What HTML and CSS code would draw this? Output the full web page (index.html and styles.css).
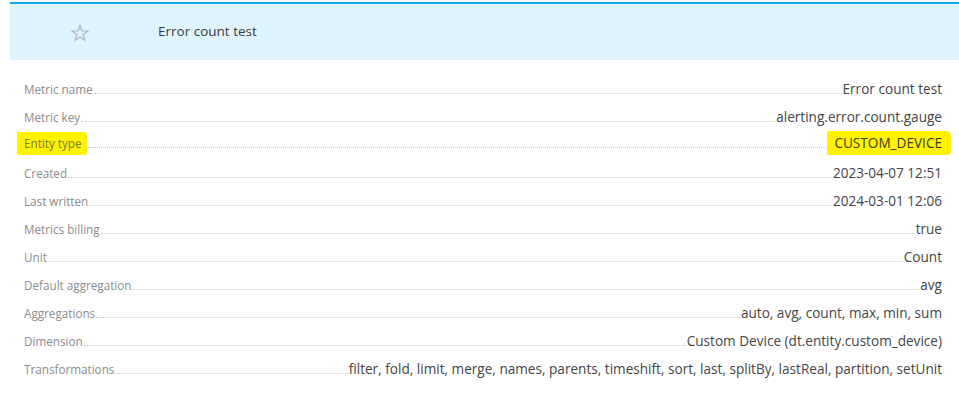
FILE: index.html
```html
<!DOCTYPE html>
<html>
<head>
<meta charset="utf-8">
<link rel="stylesheet" href="styles.css">
</head>
<body>
<div class="page">
  <div class="header">
    <div class="star-col">
      <svg class="star" width="18" height="18" viewBox="0 0 18 18"><path d="M9 1.2 L11 6.9 L17 7 L12.2 10.6 L13.9 16.4 L9 13 L4.1 16.4 L5.8 10.6 L1 7 L7 6.9 Z" fill="none" stroke="#b3b6b8" stroke-width="1.2" stroke-linejoin="miter"/></svg>
    </div>
    <div class="title">Error count test</div>
  </div>
  <div class="list">
    <div class="row"><span class="label">Metric name</span><span class="leader"></span><span class="value">Error count test</span></div>
    <div class="row"><span class="label">Metric key</span><span class="leader"></span><span class="value">alerting.error.count.gauge</span></div>
    <div class="row"><span class="label mark mark-l">Entity type</span><span class="leader"></span><span class="value mark mark-v">CUSTOM_DEVICE</span></div>
    <div class="row"><span class="label">Created</span><span class="leader"></span><span class="value">2023-04-07 12:51</span></div>
    <div class="row"><span class="label">Last written</span><span class="leader"></span><span class="value">2024-03-01 12:06</span></div>
    <div class="row"><span class="label">Metrics billing</span><span class="leader"></span><span class="value">true</span></div>
    <div class="row"><span class="label">Unit</span><span class="leader"></span><span class="value">Count</span></div>
    <div class="row"><span class="label">Default aggregation</span><span class="leader"></span><span class="value">avg</span></div>
    <div class="row"><span class="label">Aggregations</span><span class="leader"></span><span class="value">auto, avg, count, max, min, sum</span></div>
    <div class="row"><span class="label">Dimension</span><span class="leader"></span><span class="value">Custom Device (dt.entity.custom_device)</span></div>
    <div class="row"><span class="label">Transformations</span><span class="leader"></span><span class="value">filter, fold, limit, merge, names, parents, timeshift, sort, last, splitBy, lastReal, partition, setUnit</span></div>
  </div>
</div>
</body>
</html>
```

FILE: styles.css
```css
html, body {
  margin: 0;
  padding: 0;
  background: #ffffff;
}
body {
  font-family: "Open Sans", "Liberation Sans", sans-serif;
  color: #454646;
}
.page {
  padding: 2px 0 0 10px;
}
.header {
  display: flex;
  align-items: center;
  height: 56px;
  background: #def3fb;
  border-top: 2px solid #1ca4e6;
}
.star-col {
  width: 138px;
  display: flex;
  justify-content: center;
  padding-top: 2px;
}
.star {
  display: block;
  margin-left: 2px;
}
.title {
  margin-left: 10px;
  font-size: 13.5px;
  color: #3b3c3d;
  padding-bottom: 2px;
}
.list {
  padding: 15px 17px 0 14px;
}
.row {
  display: flex;
  align-items: baseline;
  height: 28px;
  line-height: 28px;
}
.label {
  font-size: 11.7px;
  color: #8a8b8c;
  white-space: nowrap;
}
.leader {
  flex: 1;
  border-bottom: 1px dotted #c4c4c4;
  margin: 0 1px;
  min-width: 4px;
}
.value {
  font-size: 13.6px;
  color: #444546;
  white-space: nowrap;
}
.mark {
  background: #fff200;
  line-height: 22px;
}
.mark-l {
  padding: 0 5px 1px 7px;
  margin-left: -7px;
  border-radius: 1px 4px 2px 3px;
  color: #7b7d30;
}
.mark-v {
  padding: 1px 9px 1px 7px;
  margin-right: -9px;
  border-radius: 2px 5px 4px 1px;
  color: #3d3f1c;
}
```
